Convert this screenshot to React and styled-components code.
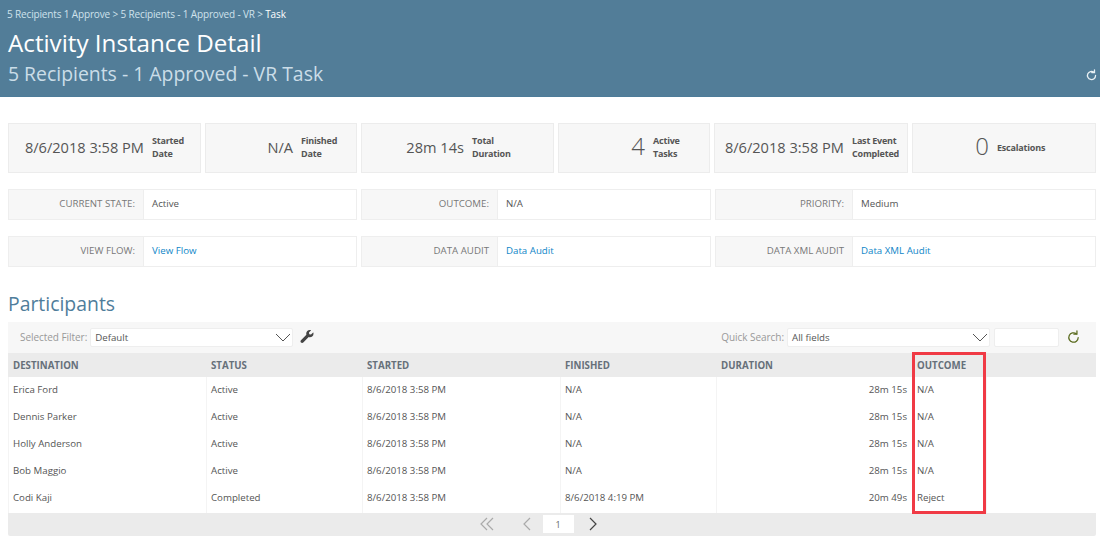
import React from "react";
import styled, { createGlobalStyle } from "styled-components";

const Global = createGlobalStyle`
  html, body { margin: 0; padding: 0; background: #fff; }
  body { font-family: "Open Sans", "Noto Sans", sans-serif; color: #555; overflow: hidden; }
  * { box-sizing: border-box; }
`;
const Page = styled.div`width: 1100px; height: 539px; overflow: hidden;`;
const Header = styled.header`
  height: 97px; background: #527d98; border-bottom: 1px solid #4d7c99;
  padding: 7px 2px 0 8px; display: flex; justify-content: space-between; align-items: flex-end;
`;
const HeaderText = styled.div`align-self: flex-start;`;
const Crumbs = styled.div`font-size: 10px; line-height: 14px; color: #cfe2ec; margin-left: -1px; letter-spacing: -0.15px; b { font-weight: 400; color: #fff; }`;
const Title = styled.h1`margin: 6px 0 0; font-size: 24.2px; line-height: 32px; font-weight: 400; color: #fff;`;
const Subtitle = styled.h2`margin: 0; font-size: 19.4px; line-height: 30px; font-weight: 400; color: #cbdde8;`;
const RefreshSlot = styled.span`display: flex; padding-bottom: 14px; color: #e8f0f4;`;
const Content = styled.main`padding: 26px 4px 0 8px;`;
const Stats = styled.section`display: grid; grid-template-columns: 193px 152px 193px 152px 194px 184px; column-gap: 4px;`;
const Stat = styled.div`
  height: 50px; background: #f7f7f7; border: 1px solid #ececec; display: flex; align-items: center; justify-content: flex-end;
  padding: 0 ${p => p.$pr}px 2px 0; gap: 8px;
`;
const StatValue = styled.span`font-size: ${p => (p.$big ? 24 : 14.6)}px; line-height: ${p => (p.$big ? "30px" : "20px")}; margin-bottom: ${p => (p.$big ? 2 : 0)}px; font-weight: ${p => (p.$big ? 300 : 400)}; color: #555; white-space: nowrap;`;
const StatLabel = styled.span`font-size: 9px; line-height: 13px; font-weight: 700; color: #555; width: ${p => p.$w}px; white-space: pre-line; letter-spacing: -0.2px;`;
const InfoRow = styled.section`display: grid; grid-template-columns: 349px 350px 381px; column-gap: 4px; margin-top: ${p => p.$mt}px;`;
const Info = styled.div`height: 31px; border: 1px solid #eee; display: flex; background: #fff;`;
const InfoLabel = styled.div`
  width: ${p => p.$w}px; background: #f7f7f7; border-right: 1px solid #eee; display: flex; align-items: center; justify-content: flex-end;
  padding: 0 8px 2px 0; font-size: 9.7px; color: #777;
`;
const InfoValue = styled.div`padding: 0 0 2px 8px; display: flex; align-items: center; font-size: 9.7px; color: #555;`;
const Link = styled.a`color: #0f86c8; text-decoration: none;`;
const SectionTitle = styled.h3`margin: 24px 0 0; font-size: 19.4px; line-height: 25px; font-weight: 400; color: #4f7d9b;`;
const GridWrap = styled.section`position: relative; margin-top: 6px;`;
const Toolbar = styled.div`height: 31px; background: #f7f7f7; display: flex; align-items: center; padding: 0 15px 0 12px; justify-content: space-between;`;
const ToolGroup = styled.div`display: flex; align-items: center; gap: 3px;`;
const ToolLabel = styled.span`font-size: 10px; letter-spacing: -0.05px; color: #999; margin-bottom: 1px;`;
const Select = styled.div`
  width: 203px; height: 19px; background: #fff; border: 1px solid #eee; border-radius: 2px; display: flex; align-items: center;
  justify-content: space-between; padding: 0 1px 1px 4px; font-size: 9.7px; color: #555;
`;
const WrenchSlot = styled.span`display: flex; margin: 0 0 2px 4px;`;
const SearchBox = styled.div`width: 65px; height: 19px; background: #fff; border: 1px solid #eee; border-radius: 2px; margin: 0 4px 0 1px;`;
const Row = styled.div`display: grid; grid-template-columns: 198px 156px 198px 156px 196px 74px 1fr; height: ${p => p.$h}px;`;
const HeadRow = styled(Row)`background: #ebebeb;`;
const HeadCell = styled.div`font-size: 9.7px; font-weight: 700; color: #66707a; padding-left: 5px; display: flex; align-items: center;`;
const Cell = styled.div`
  font-size: 9.7px; color: #555; display: flex; align-items: center; padding: 0 5px 3px 4px; background: #fff;
  justify-content: ${p => (p.$right ? "flex-end" : "flex-start")};
  border-left: 1px solid #f4f4f4;
`;
const Footer = styled.div`height: 23px; background: #ebebeb; border-radius: 0 0 2px 2px; display: flex; align-items: center; justify-content: center; padding-right: 28px;`;
const Pager = styled.div`display: flex; align-items: center; color: #aaa;`;
const PagerGap = styled.span`width: 27px;`;
const PageBox = styled.div`width: 31px; height: 18px; background: #fff; font-size: 9px; color: #666; display: flex; align-items: center; justify-content: center; margin: 0 14px 0 11px;`;
const Highlight = styled.div`position: absolute; left: 904px; top: 30px; width: 74px; height: 162px; border: 3px solid #f03a45; pointer-events: none;`;

const Chevron = () => (
  <svg width="16" height="9" viewBox="0 0 16 9" fill="none" stroke="#555" strokeWidth="1"><path d="M1 1l7 7 7-7" /></svg>
);
const Arrow = ({ d, w, c }) => (
  <svg width={w} height="14" viewBox={`0 0 ${w} 14`} fill="none" stroke={c} strokeWidth="1.2"><path d={d} /></svg>
);
const Wrench = () => (
  <svg width="14" height="13" viewBox="0 0 512 512" fill="#444"><path d="M507.7 109.1c-2.2-9-13.5-12.1-20.1-5.5l-74.4 74.4-67.9-11.3-11.3-67.9 74.4-74.4c6.6-6.6 3.4-17.9-5.7-20.2-47.4-11.7-99.6.9-136.6 37.9-39.6 39.6-50.7 97.1-34.1 147.1L18.7 402.8c-25 25-25 65.5 0 90.5s65.5 25 90.5 0l213.2-213.2c50.1 16.7 107.5 5.5 147.3-34.3 37.1-37.1 49.7-89.3 38-136.7z" /></svg>
);
const Refresh = ({ size, c, sw }) => (
  <svg width={size} height={size} viewBox="0 0 24 24" fill="none" stroke={c} strokeWidth={sw} strokeLinecap="round"><path d="M19.5 12a7.5 7.5 0 1 1-3-6" /><path d="M17.5 1.5v5h-5" /></svg>
);

const stats = [
  ["8/6/2018 3:58 PM", "Started\nDate", 14, 34, false],
  ["N/A", "Finished\nDate", 18, 37, false],
  ["28m 14s", "Total\nDuration", 41, 40, false],
  ["4", "Active\nTasks", 24, 32, true],
  ["8/6/2018 3:58 PM", "Last Event\nCompleted", 8, 47, false],
  ["0", "Escalations", 48, 50, true],
];
const rows = [
  ["Erica Ford", "Active", "N/A", "28m 15s", "N/A"],
  ["Dennis Parker", "Active", "N/A", "28m 15s", "N/A"],
  ["Holly Anderson", "Active", "N/A", "28m 15s", "N/A"],
  ["Bob Maggio", "Active", "N/A", "28m 15s", "N/A"],
  ["Codi Kaji", "Completed", "8/6/2018 4:19 PM", "20m 49s", "Reject"],
];

export default function App() {
  return (
    <Page>
      <Global />
      <Header>
        <HeaderText>
          <Crumbs>5 Recipients 1 Approve &gt; 5 Recipients - 1 Approved - VR &gt; <b>Task</b></Crumbs>
          <Title>Activity Instance Detail</Title>
          <Subtitle>5 Recipients - 1 Approved - VR Task</Subtitle>
        </HeaderText>
        <RefreshSlot><Refresh size={13} c="#e8f0f4" sw={2.4} /></RefreshSlot>
      </Header>
      <Content>
        <Stats>
          {stats.map(([v, l, pr, w, big]) => (
            <Stat key={l} $pr={pr}>
              <StatValue $big={big}>{v}</StatValue>
              <StatLabel $w={w}>{l}</StatLabel>
            </Stat>
          ))}
        </Stats>
        <InfoRow $mt={16}>
          <Info><InfoLabel $w={135}>CURRENT STATE:</InfoLabel><InfoValue>Active</InfoValue></Info>
          <Info><InfoLabel $w={136}>OUTCOME:</InfoLabel><InfoValue>N/A</InfoValue></Info>
          <Info><InfoLabel $w={137}>PRIORITY:</InfoLabel><InfoValue>Medium</InfoValue></Info>
        </InfoRow>
        <InfoRow $mt={16}>
          <Info><InfoLabel $w={135}>VIEW FLOW:</InfoLabel><InfoValue><Link>View Flow</Link></InfoValue></Info>
          <Info><InfoLabel $w={136}>DATA AUDIT</InfoLabel><InfoValue><Link>Data Audit</Link></InfoValue></Info>
          <Info><InfoLabel $w={137}>DATA XML AUDIT</InfoLabel><InfoValue><Link>Data XML Audit</Link></InfoValue></Info>
        </InfoRow>
        <SectionTitle>Participants</SectionTitle>
        <GridWrap>
          <Toolbar>
            <ToolGroup>
              <ToolLabel>Selected Filter:</ToolLabel>
              <Select>Default<Chevron /></Select>
              <WrenchSlot><Wrench /></WrenchSlot>
            </ToolGroup>
            <ToolGroup>
              <ToolLabel>Quick Search:</ToolLabel>
              <Select>All fields<Chevron /></Select>
              <SearchBox />
              <Refresh size={15} c="#5a6b1e" sw={2} />
            </ToolGroup>
          </Toolbar>
          <HeadRow $h={24}>
            {["DESTINATION", "STATUS", "STARTED", "FINISHED", "DURATION", "OUTCOME", ""].map((h, i) => <HeadCell key={i}>{h}</HeadCell>)}
          </HeadRow>
          {rows.map(r => (
            <Row key={r[0]} $h={27.2}>
              <Cell>{r[0]}</Cell>
              <Cell>{r[1]}</Cell>
              <Cell>8/6/2018 3:58 PM</Cell>
              <Cell>{r[2]}</Cell>
              <Cell $right>{r[3]}</Cell>
              <Cell>{r[4]}</Cell>
              <Cell />
            </Row>
          ))}
          <Footer>
            <Pager>
              <Arrow w={16} c="#aaa" d="M8 1L2 7l6 6M14 1L8 7l6 6" />
              <PagerGap />
              <Arrow w={10} c="#aaa" d="M8 1L2 7l6 6" />
              <PageBox>1</PageBox>
              <Arrow w={10} c="#444" d="M2 1l6 6-6 6" />
            </Pager>
          </Footer>
          <Highlight />
        </GridWrap>
      </Content>
    </Page>
  );
}
